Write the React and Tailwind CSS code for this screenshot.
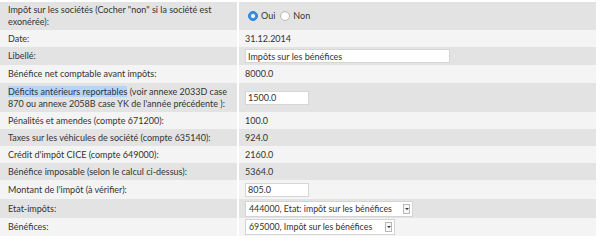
import React, { useState } from 'react';

const rows = [
  { label: 'Impôt sur les sociétés (Cocher "non" si la société est exonérée):', kind: 'radio', h: 'h-[28px]' },
  { label: 'Date:', kind: 'text', value: '31.12.2014', h: 'h-[17px]' },
  { label: 'Libellé:', kind: 'input', value: 'Impôts sur les bénéfices', w: 'w-[205px]', h: 'h-[18px]' },
  { label: 'Bénéfice net comptable avant impôts:', kind: 'text', value: '8000.0', h: 'h-[18px]' },
  { label: 'deficit', kind: 'input', value: '1500.0', w: 'w-[64px]', h: 'h-[29px]' },
  { label: 'Pénalités et amendes (compte 671200):', kind: 'text', value: '100.0', h: 'h-[17px]' },
  { label: 'Taxes sur les véhicules de société (compte 635140):', kind: 'text', value: '924.0', h: 'h-[17px]' },
  { label: "Crédit d'impôt CICE (compte 649000):", kind: 'text', value: '2160.0', h: 'h-[17px]' },
  { label: 'Bénéfice imposable (selon le calcul ci-dessus):', kind: 'text', value: '5364.0', h: 'h-[17px]' },
  { label: "Montant de l'impôt (à vérifier):", kind: 'input', value: '805.0', w: 'w-[64px]', h: 'h-[19px]' },
  { label: 'Etat-impôts:', kind: 'select', value: '444000, Etat: impôt sur les bénéfices', w: 'w-[168px]', h: 'h-[19px]' },
  { label: 'Bénéfices:', kind: 'select', value: '695000, Impôt sur les bénéfices', w: 'w-[150px]', h: 'h-[18px]' },
];

const Radio = ({ on, label, onClick }) => (
  <label className="flex items-center gap-[3px] cursor-pointer" onClick={onClick}>
    <span
      className={
        on
          ? 'w-[10px] h-[10px] rounded-full bg-[#3b8fe8] border border-[#2f7fd6] flex items-center justify-center'
          : 'w-[10px] h-[10px] rounded-full bg-white border border-[#b9b9b9] shadow-[inset_0_1px_1px_rgba(0,0,0,0.08)]'
      }
    >
      {on && <span className="w-[4px] h-[4px] rounded-full bg-white" />}
    </span>
    <span>{label}</span>
  </label>
);

const Select = ({ value, w }) => (
  <div className={`${w} h-[16px] bg-white border border-[#d4d4d4] flex items-center justify-between pl-[3px] pr-[2px] text-[8.8px]`}>
    <span className="whitespace-nowrap">{value}</span>
    <span className="w-[7px] h-[10px] border border-[#b8b8b8] bg-[#f7f7f7] flex items-center justify-center">
      <span className="w-0 h-0 border-l-[2px] border-r-[2px] border-t-[2px] border-l-transparent border-r-transparent border-t-[#333]" />
    </span>
  </div>
);

export default function App() {
  const [impot, setImpot] = useState(true);

  return (
    <div className="bg-white w-[600px] h-[243px] pt-[2px] text-[9px] leading-[12px] text-[#333]" style={{ fontFamily: 'Lato, "Liberation Sans", sans-serif' }}>
      <div className="w-[596px] flex flex-col">
        {rows.map((r, i) => (
          <div key={i} className={`flex ${r.h} ${i % 2 === 0 ? 'bg-[#e3e3e3]' : 'bg-[#f4f4f4]'}`}>
            <div className="w-[239px] shrink-0 border-r-2 border-white pl-[8px] flex items-center">
              {r.label === 'deficit' ? (
                <span>
                  <span className="bg-[#b4d5fe]">Déficits antérieurs reportables</span> (voir annexe 2033D case 870 ou annexe 2058B case YK de l'année précédente ):
                </span>
              ) : (
                <span>{r.label}</span>
              )}
            </div>
            <div className="flex-1 pl-[6px] flex items-center">
              {r.kind === 'radio' && (
                <div className="flex items-center gap-[5px] pl-[3px]">
                  <Radio on={impot} label="Oui" onClick={() => setImpot(true)} />
                  <Radio on={!impot} label="Non" onClick={() => setImpot(false)} />
                </div>
              )}
              {r.kind === 'text' && <span>{r.value}</span>}
              {r.kind === 'input' && (
                <input
                  defaultValue={r.value}
                  className={`${r.w} h-[14px] bg-white border border-[#d6d6d6] px-[2px] outline-none text-[9px] text-[#333]`}
                />
              )}
              {r.kind === 'select' && <Select value={r.value} w={r.w} />}
            </div>
          </div>
        ))}
      </div>
    </div>
  );
}
